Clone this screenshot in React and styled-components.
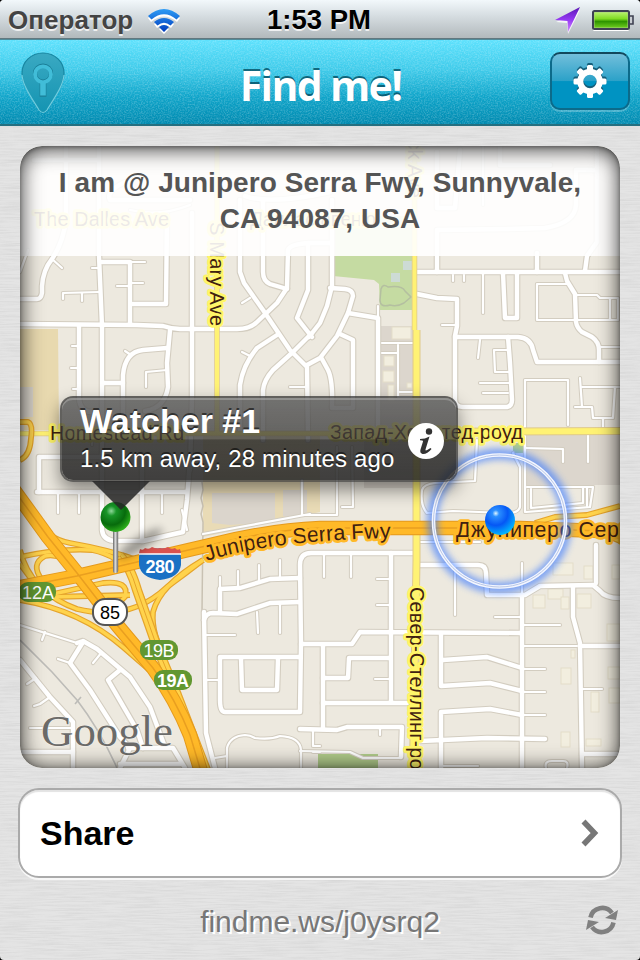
import React from 'react';
import styled, { createGlobalStyle } from 'styled-components';

const svgUrl = (markup) => `url("data:image/svg+xml,${encodeURIComponent(markup)}")`;

const brushed = svgUrl(
  `<svg xmlns="http://www.w3.org/2000/svg" width="320" height="240"><filter id="b" x="0" y="0" width="100%" height="100%"><feTurbulence type="fractalNoise" baseFrequency="0.03 0.7" numOctaves="3" stitchTiles="stitch"/><feColorMatrix values="0 0 0 0 0.45  0 0 0 0 0.45  0 0 0 0 0.45  0 0.45 0 0 -0.16"/></filter><rect width="320" height="240" filter="url(#b)"/></svg>`
);
const grain = svgUrl(
  `<svg xmlns="http://www.w3.org/2000/svg" width="200" height="90"><filter id="g" x="0" y="0" width="100%" height="100%"><feTurbulence type="fractalNoise" baseFrequency="0.7" numOctaves="2" stitchTiles="stitch"/><feColorMatrix values="0 0 0 0 1  0 0 0 0 1  0 0 0 0 1  0 0.5 0 0 -0.19"/></filter><rect width="200" height="90" filter="url(#g)"/></svg>`
);

const Global = createGlobalStyle`
  html, body { margin: 0; padding: 0; background: #000; }
  * { box-sizing: border-box; }
  body { font-family: "Liberation Sans", Arial, sans-serif; }
`;

const Screen = styled.main`
  display: flex;
  flex-direction: column;
  width: 640px;
  height: 960px;
  overflow: hidden;
  border-radius: 4px;
  background: ${brushed}, #e4e4e4;
`;

const StatusBar = styled.header`
  display: grid;
  flex: none;
  grid-template-columns: 1fr auto 1fr;
  align-items: center;
  height: 40px;
  padding: 0 6px 0 8px;
  background: linear-gradient(#f2f8fb 0, #d9e0e4 35%, #b2b9bc 38px, #63787f 38px, #63787f 39px, #3d9fb5 40px);
  text-shadow: 0 2px 0 rgba(255, 255, 255, 0.75);
`;

const StatusGroup = styled.div`
  display: flex;
  align-items: center;
  justify-content: ${(p) => (p.$end ? 'flex-end' : 'flex-start')};
  gap: ${(p) => (p.$end ? '11px' : '14px')};
`;

const Carrier = styled.span`
  font-size: 26px;
  font-weight: bold;
  line-height: 38px;
  letter-spacing: 0.05px;
  color: #444;
`;

const Clock = styled.time`
  padding-right: 4px;
  font-size: 27.5px;
  font-weight: bold;
  line-height: 38px;
  color: #000;
`;

const NavBar = styled.nav`
  display: grid;
  flex: none;
  grid-template-columns: 1fr auto 1fr;
  align-items: start;
  height: 86px;
  padding: 12px 10px 0 21px;
  border-bottom: 2px solid #256f80;
  background: ${grain}, linear-gradient(#5de1fd 0, #3fcbea 35%, #0fa4c9 68%, #008ab0 100%);
`;

const Title = styled.h1`
  margin: 0;
  padding-right: 10px;
  font: bold 41px/66px "Open Sans", "Noto Sans", sans-serif;
  letter-spacing: -1.65px;
  color: #fff;
  text-shadow: 0 -2px 0 rgba(0, 70, 90, 0.75);
`;

const SettingsButton = styled.button`
  justify-self: end;
  display: flex;
  align-items: center;
  justify-content: center;
  width: 80px;
  height: 58px;
  padding: 0;
  border: 2px solid #0c6a8a;
  border-top-color: #12485c;
  border-radius: 10px;
  background: linear-gradient(#72bfdb 0, #2ba1c8 50%, #0093c2 51%, #0093c2 100%);
  box-shadow: 0 2px 0 rgba(255, 255, 255, 0.25);
`;

const Content = styled.section`
  display: flex;
  flex: none;
  flex-direction: column;
  padding: 20px 18px 0;
`;

const MapCard = styled.div`
  position: relative;
  width: 600px;
  height: 622px;
  margin: 0 2px 20px;
  overflow: hidden;
  border-radius: 22px;
`;

const MapDrawing = styled.svg`
  display: block;
  width: 600px;
  height: 622px;
  font-family: "Liberation Sans", Arial, sans-serif;
`;

const AddressBanner = styled.p`
  position: absolute;
  top: 0;
  left: 0;
  right: 0;
  height: 110px;
  margin: 0;
  padding: 19px 20px 0;
  background: rgba(255, 255, 255, 0.9);
  font-size: 28px;
  font-weight: bold;
  line-height: 36px;
  letter-spacing: 0.06px;
  text-align: center;
  color: #555;
`;

const InnerShadow = styled.div`
  position: absolute;
  inset: 0;
  border-radius: 22px;
  pointer-events: none;
  box-shadow: inset 0 2px 22px rgba(0, 0, 0, 0.85), inset 0 1px 4px rgba(0, 0, 0, 0.35);
`;

const Callout = styled.div`
  position: absolute;
  left: 40px;
  top: 250px;
  display: flex;
  align-items: center;
  justify-content: space-between;
  width: 398px;
  height: 86px;
  padding: 0 11px 0 18px;
  border: 2px solid rgba(50, 50, 50, 0.75);
  border-radius: 13px;
  background: linear-gradient(rgba(92, 92, 92, 0.85), rgba(56, 56, 56, 0.76) 50%, rgba(36, 36, 36, 0.82) 51%, rgba(38, 38, 38, 0.87));
  background-clip: padding-box;
  box-shadow: 0 8px 18px rgba(0, 0, 0, 0.45), inset 0 2px 0 rgba(255, 255, 255, 0.22);
  color: #fff;
  text-shadow: 0 -2px 0 rgba(0, 0, 0, 0.55);
`;

const CalloutText = styled.div`
  display: flex;
  flex-direction: column;
  padding-bottom: 1px;
  white-space: nowrap;
`;

const CalloutTitle = styled.strong`
  font-size: 34px;
  line-height: 40px;
`;

const CalloutDetail = styled.span`
  font-size: 24px;
  line-height: 35px;
  letter-spacing: 0.15px;
`;

const InfoIcon = styled.svg`
  width: 38px;
  height: 38px;
  margin-top: 3px;
`;

const CalloutTail = styled.div`
  position: absolute;
  top: 83px;
  left: 30px;
  width: 58px;
  height: 29px;
  background: rgba(38, 38, 38, 0.86);
  clip-path: polygon(0 0, 100% 0, 50% 100%);
`;

const ShareButton = styled.button`
  display: flex;
  align-items: center;
  justify-content: space-between;
  width: 604px;
  height: 90px;
  padding: 0 21px 0 20px;
  border: 2px solid #aaa;
  border-radius: 21px;
  background: #fff;
  box-shadow: 0 2px 0 #f8f8f8, inset 0 2px 1px #e3e3e3;
  font: bold 34px "Liberation Sans", Arial, sans-serif;
  color: #000;
`;

const Footer = styled.footer`
  display: grid;
  grid-template-columns: 1fr auto 1fr;
  align-items: center;
  height: 82px;
  padding: 6px 3px 0 0;
`;

const ShareLink = styled.span`
  grid-column: 2;
  padding-left: 3px;
  font-size: 30px;
  line-height: 40px;
  letter-spacing: -0.02px;
  color: #777;
  text-shadow: 2px 2px 0 #fff;
`;

const RefreshIcon = styled.svg`
  justify-self: end;
  width: 34px;
  height: 30px;
  margin-top: -4px;
`;

const wide = [
  'M99 146V256L102 326V530Q103 541 117 541H143L183 532L187 500L190 460',
  'M20 324L137 325L163 326Q172 329 180 329H237Q250 329 257 322L277 303L287 288L288 250Q290 244 310 243H332',
  'M20 299H37Q41 299 42 293L42 286Q43 270 52 259Q63 243 66 220V146',
  'M102 262H130V324', 'M133 304H166L167 215', 'M192 213V397L190 470',
  'M240 200V272L244 283L263 310L290 350L307 367L308 440',
  'M263 200V272Q263 281 270 284L287 289',
  'M308 243V290L297 318L308 332L312 337',
  'M312 333L293 352L273 370Q264 380 263 390V440',
  'M277 335L257 348Q243 365 240 385V430',
  'M307 365L320 358L337 336L348 313L353 296Q353 290 345 289L330 288',
  'M332 200V286L327 306L320 323L309 337', 'M340 334L353 340V408H332Q333 380 328 370L322 359',
  'M348 313L378 318V430', 'M415 272H620', 'M437 272V230L508 229L545 228Q575 223 576 205V170H595',
  'M537 253V272', 'M585 271L587 256L597 242V146', 'M503 273L505 318H517V273',
  'M565 273L567 281L575 294L576 322Q577 328 582 332L592 337Q599 342 599 350V362',
  'M417 294L437 298L457 299V326L455 336V400Q455 407 463 407H507Q512 406 512 400L510 363L508 337',
  'M455 337H518Q531 338 533 350L537 362H620',
  'M79 326V398Q80 412 92 412', 'M104 383H123', 'M123 415V375Q125 352 143 350L167 348',
  'M170 330L167 363L168 387Q165 408 145 411', 'M39 492V457H101', 'M37 492H187', 'M142 455V541',
  'M83 642L70 663L90 690L120 737L130 748L120 768', 'M77 643L83 641L97 649L130 677L150 707L165 747',
  'M120 670L108 680L137 730L143 748', 'M128 748H173L185 768',
  'M20 660L50 697L73 722V768', 'M20 752H73', 'M120 764H180',
  'M204 612L206 733L215 768', 'M204 620Q206 613 213 613L237 614L270 603L300 602',
  'M220 612V589L240 588L270 579L300 578',
  'M415 553H311Q300 553 300 565L301 643L300 712H225Q220 712 220 700V657H300',
  'M241 658L242 690H277L278 658', 'M391 553V702', 'M301 644H352L360 632L521 633',
  'M390 658H349L348 678H323', 'M323 645V729', 'M323 703H407', 'M300 729L337 730L347 727H402L401 757',
  'M420 565H478Q486 565 486 573L487 595H525L540 586L593 585L600 591Q605 598 620 598', 'M596 545V583',
  'M573 587V617L580 643L582 768', 'M522 595V768', 'M583 646H620', 'M441 633V686L490 683L522 691',
  'M443 660L487 657L522 668', 'M441 768V712L490 709L522 715', 'M420 741L487 738L545 739', 'M582 754H620',
  'M34 160H96', 'M130 180Q105 190 110 200H190', 'M245 196Q270 205 330 192', 'M437 152V208H455L460 150', 'M550 165H500V146'
];

const thin = [
  'M52 259L62 268', 'M20 272L28 250', 'M130 262H145', 'M117 286H130', 'M130 283H143', 'M92 268H99',
  'M63 299V293L99 292', 'M82 293V301', 'M250 298L242 303', 'M242 352L250 356', 'M290 387H308',
  'M378 306V318', 'M382 343H413', 'M398 345V397H413', 'M382 353H398', 'M398 392H413',
  'M453 275V281', 'M464 275V281', 'M483 274V313', 'M567 284H537V320H618', 'M577 295H597L600 298H618V319', 'M610 299V320',
  'M442 325H456', 'M480 340L478 358', 'M507 350H494L495 372H510', 'M480 383H510', 'M483 393H508',
  'M525 512V380H568V425', 'M580 378L582 407', 'M582 387H620', 'M615 387L613 418H593L592 407H575', 'M603 418V428', 'M599 347H620',
  'M525 448L563 449V462', 'M588 435V462', 'M513 453L520 467V507Q518 514 505 513L453 511L427 513Q420 505 422 490Q424 484 435 483L475 481L477 440',
  'M526 512L590 507L593 487H527', 'M531 489V508L583 503V487', 'M587 487V506',
  'M320 515H337V447', 'M342 507H353L352 447', 'M72 346H79', 'M71 368H79', 'M73 389H79', 'M125 351L131 355',
  'M167 370L146 372V387', 'M58 492V513', 'M79 492V513', 'M162 492V513',
  'M20 625L77 643', 'M45 632L42 640', 'M70 663L58 659', 'M102 652L93 663', 'M34 706L40 704L50 697', 'M30 728H73', 'M36 678L27 684',
  'M220 577V590', 'M238 571V587', 'M259 565V582', 'M280 560V578', 'M257 612L258 633', 'M280 603V633',
  'M206 635H235', 'M206 680H220', 'M301 644H320', 'M215 758L227 756',
  'M227 768V748Q230 736 245 735Q250 735 255 738Q270 740 280 736Q300 737 301 750V768', 'M313 730V746H320', 'M313 752H320',
  'M324 553V577', 'M351 553V577', 'M377 579H390', 'M377 605H390', 'M375 679H390', 'M380 727V735', 'M300 751L350 752L363 758H401',
  'M420 542H480', 'M522 563V595', 'M455 568V615', 'M495 617H522', 'M522 625H560', 'M522 646H577',
  'M522 669H545', 'M522 692H545', 'M522 715H545', 'M583 689H602', 'M443 766H478', 'M546 768Q544 761 552 761H563Q569 761 567 768',
  'M187 530L182 510', 'M203 534L240 527L310 514', 'M92 412V445', 'M302 480V515L320 515', 'M483 146V205', 'M130 210Q160 217 190 205'
];

const ramps = [
  'M20 503Q42 538 70 543Q110 550 137 560L203 548', 'M20 557Q60 548 92 550Q120 556 131 575L145 605',
  'M42 580Q30 564 45 556Q60 552 77 570', 'M20 550Q30 592 77 609Q130 622 167 587Q185 574 203 560',
  'M20 600Q80 610 123 647L153 673', 'M53 594L103 583Q130 580 125 597Q120 603 108 606',
  'M203 560Q160 585 153 612Q151 635 167 660', 'M45 580L77 572L125 562', 'M20 500L30 515Q50 538 58 548',
  'M20 422H28Q33 424 31 438Q30 456 20 460', 'M77 573Q97 600 123 605', 'M535 523L555 517L587 515L620 506', 'M587 527L620 541',
  'M130 595L50 597L20 592', 'M20 564L32 580'
];

const buildings = [
  [553, 563, 20, 12], [584, 566, 9, 13], [533, 595, 12, 13], [548, 589, 15, 10], [561, 597, 8, 12], [577, 594, 14, 14],
  [561, 668, 10, 16], [591, 692, 8, 20], [561, 732, 9, 15], [586, 739, 15, 7], [571, 650, 4, 8], [607, 624, 13, 17],
  [608, 667, 12, 12], [612, 565, 8, 14], [609, 688, 11, 15], [392, 327, 19, 12], [384, 356, 10, 10], [383, 371, 11, 11], [388, 385, 6, 16], [407, 383, 5, 5]
];

function Roads() {
  return (
    <g fill="none" strokeLinejoin="round" strokeLinecap="round">
      <g stroke="#d3cdc0">
        {thin.map((d) => <path key={d} d={d} strokeWidth="4.2" />)}
        {wide.map((d) => <path key={d} d={d} strokeWidth="6.6" />)}
      </g>
      <g stroke="#fff">
        {thin.map((d) => <path key={d} d={d} strokeWidth="2.2" />)}
        {wide.map((d) => <path key={d} d={d} strokeWidth="4.4" />)}
      </g>
    </g>
  );
}

function Highways() {
  const i280 = 'M10 589L77 576L137 562L210 545Q270 530 320 528H420L520 528L630 532';
  const sr85 = 'M14 490L48 537L77 573L117 625L153 668Q176 700 190 735L202 775';
  const side = 'M120 556Q130 566 137 590L157 647L177 695L208 775';
  return (
    <g fill="none" strokeLinejoin="round">
      <g stroke="#dfc98a">
        <path d="M217 146V432M20 433.500H330M414.500 146V330" strokeWidth="5.500" />
        <path d="M416.500 330V560L413 768M330 432L620 431" strokeWidth="8" />
      </g>
      <g stroke="#fff274">
        <path d="M217 146V432M20 433.500H330M414.500 146V330" strokeWidth="4" />
        <path d="M416.500 330V560L413 768M330 432L620 431" strokeWidth="6" />
      </g>
      {ramps.map((d) => <path key={d} d={d} stroke="#e5a42c" strokeWidth="5.8" />)}
      {ramps.map((d) => <path key={d} d={d} stroke="#ffd34c" strokeWidth="3.4" />)}
      <path d={side} stroke="#e5a42c" strokeWidth="10" />
      <path d={side} stroke="#ffd34c" strokeWidth="7.600" />
      <path d={side} stroke="#e5a42c" strokeWidth="1" />
      <path d={i280} stroke="#e59a1c" strokeWidth="14.500" />
      <path d={sr85} stroke="#e59a1c" strokeWidth="14.500" />
      <path d={i280} stroke="#ffb928" strokeWidth="12.500" />
      <path d={sr85} stroke="#ffb928" strokeWidth="12.500" />
      <path d={i280} stroke="#e99f20" strokeWidth="1.500" />
      <path d={sr85} stroke="#e99f20" strokeWidth="1.500" />
    </g>
  );
}

function RoadLabels() {
  return (
    <g fontSize="20" fill="#402010" stroke="#fff568" strokeWidth="5.5" strokeLinejoin="round" paintOrder="stroke">
      <text x="34" y="226" textLength="135">The Dalles Ave</text>
      <text x="250" y="226" textLength="126">Даллас-авеню</text>
      <text x="50" y="440" textLength="134">Homestead Rd</text>
      <text x="330" y="439" textLength="193">Запад-Хомстед-роуд</text>
      <text transform="translate(209.500 222) rotate(90)" textLength="104">S Mary Ave</text>
      <text transform="translate(408 198) rotate(90)" textAnchor="end">Hollenbeck Ave</text>
      <text transform="translate(409.500 587) rotate(90)" textLength="204">Север-Стеллинг-роуд</text>
      <g stroke="#ffb928" fontSize="21.500">
        <path id="fwy" d="M207 561Q270 540 395 538" fill="none" stroke="none" />
        <text><textPath href="#fwy" textLength="186">Junipero Serra Fwy</textPath></text>
        <text x="456" y="537" textLength="188">Джуниперо Серра</text>
      </g>
    </g>
  );
}

function Shields() {
  return (
    <g textAnchor="middle" fontSize="19">
      <path d="M140 550q3 2 5-1q4 2 7-1q4 1 8 0q4 1 8 0q3 3 7 1q2 3 5 1l1 7v8q-2 13-21 15q-19-2-21-15v-8z" fill="#1b71c4" />
      <path d="M140 549q3 2 5-1q4 2 7-1q4 2 8 1q4 1 8-1q3 3 7 1q2 3 5 1l1 5h-42z" fill="#d9534f" />
      <path d="M139 554h42" stroke="#fff" strokeWidth="1.400" />
      <text x="160" y="573" fill="#fff" fontWeight="bold" fontSize="18" textLength="29">280</text>
      <rect x="93" y="599" width="34" height="26" rx="12" fill="#fff" stroke="#555" strokeWidth="2" />
      <text x="110" y="618.500" fill="#000" fontSize="18">85</text>
      <rect x="19" y="582" width="37" height="20" rx="9" fill="#619731" />
      <text x="38" y="598.500" fill="#fff" fontSize="18" textLength="32">12A</text>
      <rect x="140" y="640" width="38" height="20" rx="9" fill="#619731" />
      <text x="159" y="656.500" fill="#fff" fontSize="18" textLength="31">19B</text>
      <rect x="154" y="670" width="38" height="20" rx="9" fill="#619731" />
      <text x="173" y="686.500" fill="#fff" fontWeight="bold" fontSize="18" textLength="32">19A</text>
    </g>
  );
}

function Markers() {
  return (
    <g>
      <ellipse cx="146" cy="548" rx="26" ry="6" fill="#000" opacity=".38" filter="url(#soft)" transform="rotate(-32 135 556)" />
      <rect x="113" y="528" width="5.200" height="45" rx="2" fill="url(#steel)" />
      <circle cx="115.500" cy="517" r="15" fill="url(#green)" />
      <circle cx="499.500" cy="521" r="67" fill="none" stroke="#3c7bff" strokeWidth="11" opacity=".65" filter="url(#glow)" />
      <circle cx="499.500" cy="521" r="66" fill="none" stroke="#f3f6ff" strokeWidth="3.600" />
      <circle cx="499.500" cy="521" r="66" fill="none" stroke="#b9c7e6" strokeWidth="1" />
      <circle cx="500" cy="520" r="15" fill="url(#blue)" />
    </g>
  );
}

function MapView() {
  return (
    <MapDrawing viewBox="20 146 600 622" aria-label="Map">
      <defs>
        <filter id="soft" x="-50%" y="-100%" width="200%" height="300%"><feGaussianBlur stdDeviation="4" /></filter>
        <filter id="glow" x="-30%" y="-30%" width="160%" height="160%"><feGaussianBlur stdDeviation="3.500" /></filter>
        <linearGradient id="steel"><stop stopColor="#666" /><stop offset=".45" stopColor="#ddd" /><stop offset="1" stopColor="#666" /></linearGradient>
        <radialGradient id="green" cx=".36" cy=".3" r=".75">
          <stop stopColor="#8fd79a" /><stop offset=".22" stopColor="#189528" /><stop offset=".62" stopColor="#076b0c" /><stop offset="1" stopColor="#32b61c" />
        </radialGradient>
        <radialGradient id="blue" cx=".36" cy=".28" r=".8">
          <stop stopColor="#e0f6ff" /><stop offset=".14" stopColor="#2a8fff" /><stop offset=".5" stopColor="#0557f5" /><stop offset="1" stopColor="#00c8ff" />
        </radialGradient>
      </defs>
      <rect x="20" y="146" width="600" height="622" fill="#ede9df" />
      <path d="M20 329H58L59 430H20Z" fill="#e8d9af" />
      <path d="M20 387H33V417H24V432H20Z" fill="#dbd5cc" />
      <path d="M203 436H320V512L203 537Z" fill="#e9dbb6" />
      <path d="M212 493H275V522L230 525L212 523ZM283 490H307V512L292 519L283 516Z" fill="#dbd5cc" />
      <path d="M333 216H413V310H380L379 284L374 280L333 276Z" fill="#c5dba2" />
      <path d="M403 261H412V270H403ZM391 273H400V282H391Z" fill="#cddbd5" />
      <path d="M381 289Q383 283 388 287Q402 285 405 291L411 297L404 303Q397 307 390 305Q380 308 380 300Z" fill="none" stroke="#b4bfa0" strokeWidth="1.500" />
      <path d="M380 326H413V430H380ZM527 435H620V485H527ZM364 440H414V488H364Z" fill="#dcd6cd" />
      <path d="M513 443H523V453H513ZM318 754H378V768H318Z" fill="#b0cb8a" />
      {buildings.map(([x, y, w, h]) => <rect key={`${x}-${y}`} x={x} y={y} width={w} height={h} fill="#f2eedf" stroke="#e4ddc9" />)}
      <path d="M202 482l1 8-2 8 2 8-2 8 2 8-1 90" fill="none" stroke="#c8c1b2" strokeWidth="1.500" />
      <path d="M20 640L52 672L77 700Q100 730 117 768M75 704l6-7" fill="none" stroke="#bdbcb8" strokeWidth="1.600" />
      <Roads />
      <Highways />
      <RoadLabels />
      <Shields />
      <text x="41" y="746" fontFamily="Liberation Serif, serif" fontSize="45" fill="#6b6b69" stroke="#f5f3ee" strokeWidth="1" paintOrder="stroke" textLength="132" lengthAdjust="spacingAndGlyphs">Google</text>
      <Markers />
    </MapDrawing>
  );
}

function Wifi() {
  return (
    <svg width="34" height="27" viewBox="0 -1 34 27" fill="none">
      <defs><linearGradient id="wf" x2="0" y2="1"><stop stopColor="#2d9cf5" /><stop offset="1" stopColor="#003bbd" /></linearGradient></defs>
      <g transform="translate(0 2)" fill="#fff"><path d="M1 8Q17-6 33 8L30 12Q17 1 4 12ZM7 14Q17 6 27 14L24 18Q17 12 10 18ZM12 19Q17 16 22 19L17 24Z" /></g>
      <path d="M1 8Q17-6 33 8L29.500 11.500Q17 1 4.500 11.500ZM7 14Q17 6 27 14L23.500 17.500Q17 12 10.500 17.500ZM12 19Q17 15 22 19L17 24Z" fill="url(#wf)" />
    </svg>
  );
}

function LocationArrow() {
  return (
    <svg width="26" height="27" viewBox="0 0 26 27">
      <defs><linearGradient id="la" x2="0" y2="1"><stop stopColor="#5b19b5" /><stop offset=".5" stopColor="#9438f2" /><stop offset="1" stopColor="#d18cff" /></linearGradient></defs>
      <path d="M25 3L13 27L12 16L1 15Z" fill="#fff" opacity=".8" />
      <path d="M25 0L13 25L12.500 14L0 13Z" fill="url(#la)" />
    </svg>
  );
}

function Battery() {
  return (
    <svg width="42" height="22" viewBox="0 -1 42 22">
      <defs><linearGradient id="bt" x2="0" y2="1"><stop stopColor="#b5f06a" /><stop offset=".42" stopColor="#7fdc22" /><stop offset=".6" stopColor="#2f9400" /><stop offset="1" stopColor="#6acb1c" /></linearGradient></defs>
      <rect x="1" y="2" width="36" height="19" rx="1.500" fill="#fff" />
      <rect x="1" y="1" width="36" height="18" rx="1.500" fill="#a9cf80" stroke="#3f4252" strokeWidth="2" />
      <rect x="2.500" y="2.500" width="33" height="15" fill="url(#bt)" />
      <path d="M38 6h3v8h-3" fill="#c9cdd2" stroke="#3f4252" strokeWidth="1.600" />
    </svg>
  );
}

function PinLogo() {
  return (
    <svg width="44" height="62" viewBox="0 0 44 62" fill="none">
      <defs><linearGradient id="pn" x2="0" y2="1"><stop stopColor="#3aa9c2" /><stop offset="1" stopColor="#1494b2" /></linearGradient></defs>
      <path d="M22 1C10 1 1 10 1 21C1 33 10 45 18 58Q22 63 26 58C34 45 43 33 43 21C43 10 34 1 22 1Z" fill="url(#pn)" stroke="#1886a1" strokeWidth="1.200" />
      <path d="M1 23C2 34 10 45 18 58Q22 63 26 58C34 45 42 34 43 23" stroke="#8ce4f4" strokeOpacity=".75" strokeWidth="1.200" />
      <g stroke="#1b7f98"><circle cx="22" cy="21.500" r="8" strokeWidth="4.200" /><path d="M22 30V44.800" strokeWidth="6.800" /></g>
      <g stroke="#41bdd8"><circle cx="22" cy="22.300" r="8" strokeWidth="3.800" /><path d="M22 30V43.600" strokeWidth="5.600" /></g>
    </svg>
  );
}

function Gear() {
  const teeth = [0, 45, 90, 135, 180, 225, 270, 315];
  const shape = (
    <>
      <circle r="9.700" fill="none" stroke="currentColor" strokeWidth="6" />
      {teeth.map((a) => <rect key={a} x="-3" y="-16.500" width="6" height="7" rx="1.500" transform={`rotate(${a})`} fill="currentColor" />)}
    </>
  );
  return (
    <svg width="36" height="38" viewBox="-18 -19 36 38">
      <g transform="translate(0 -1.500)" color="#165f7b">{shape}</g>
      <g transform="translate(0 .500)" color="#fff">{shape}</g>
    </svg>
  );
}

export default function App() {
  return (
    <>
      <Global />
      <Screen>
        <StatusBar>
          <StatusGroup>
            <Carrier>Оператор</Carrier>
            <Wifi />
          </StatusGroup>
          <Clock>1:53 PM</Clock>
          <StatusGroup $end>
            <LocationArrow />
            <Battery />
          </StatusGroup>
        </StatusBar>
        <NavBar>
          <PinLogo />
          <Title>Find me!</Title>
          <SettingsButton aria-label="Settings"><Gear /></SettingsButton>
        </NavBar>
        <Content>
          <MapCard>
            <MapView />
            <AddressBanner>I am @ Junipero Serra Fwy, Sunnyvale, CA 94087, USA</AddressBanner>
            <InnerShadow />
            <Callout>
              <CalloutText>
                <CalloutTitle>Watcher #1</CalloutTitle>
                <CalloutDetail>1.5 km away, 28 minutes ago</CalloutDetail>
              </CalloutText>
              <InfoIcon viewBox="0 0 38 38">
                <circle cx="19" cy="19" r="18" fill="#fff" />
                <circle cx="22" cy="9.500" r="3.200" fill="#333" />
                <path d="M13 17Q18 17 22.500 14.500L18.500 27.500Q18 30 23.500 26L24.500 27Q20 32.500 15.500 32Q12.500 31 13.500 27.500L16 19.500Q16.300 18.300 13 18.300Z" fill="#333" />
              </InfoIcon>
              <CalloutTail />
            </Callout>
          </MapCard>
          <ShareButton>
            <span>Share</span>
            <svg width="18" height="28" viewBox="0 0 18 28"><path d="M2.500 2.500L13.500 14L2.500 25.500" fill="none" stroke="#777" strokeWidth="5.500" /></svg>
          </ShareButton>
          <Footer>
            <ShareLink>findme.ws/j0ysrq2</ShareLink>
            <RefreshIcon viewBox="0 0 34 30">
              <g fill="none" stroke="#808080" strokeWidth="4.600">
                <path d="M5.500 12.500A12 12 0 0 1 27 8" />
                <path d="M28.500 17.500A12 12 0 0 1 7 22" />
              </g>
              <path d="M33 5L31 15L20 13ZM1 25L3 15L14 17Z" fill="#808080" />
            </RefreshIcon>
          </Footer>
        </Content>
      </Screen>
    </>
  );
}
